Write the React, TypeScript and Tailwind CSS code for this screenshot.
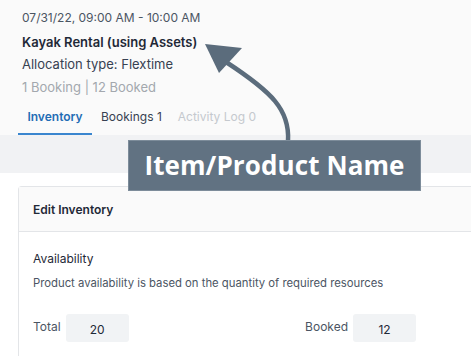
import React from "react";

const font = { fontFamily: "Inter, 'Noto Sans', sans-serif" };

function Header() {
  return (
    <div className="bg-[#fafafa] pl-[22px] pt-[10px]">
      <div className="text-[12px] leading-[16px] text-[#4b5563]">07/31/22, 09:00 AM - 10:00 AM</div>
      <div className="mt-[7px] text-[13px] font-semibold leading-[18px] text-[#1f2937]">
        Kayak Rental (using Assets)
      </div>
      <div className="mt-[4px] text-[13px] leading-[18px] text-[#374151]">Allocation type: Flextime</div>
      <div className="mt-[5px] text-[13px] leading-[18px] text-[#a3a8ae]">1 Booking | 12 Booked</div>
      <div className="mt-[13px] -ml-[4px] flex items-end text-[12px]">
        <div className="flex w-[74px] flex-col items-center">
          <span className="pb-[8px] font-semibold leading-[16px] text-[#1f6db5]">Inventory</span>
          <span className="h-[2px] w-full bg-[#3a86cf]" />
        </div>
        <span className="ml-[9px] pb-[10px] leading-[16px] text-[#374151]">Bookings 1</span>
        <span className="ml-[16px] pb-[10px] leading-[16px] text-[#c5c9ce]">Activity Log 0</span>
      </div>
    </div>
  );
}

function Field({ label, value }: { label: string; value: string }) {
  return (
    <div className="flex items-center gap-[5px]">
      <span className="-mt-[2px] text-[12px] text-[#4b5563]">{label}</span>
      <span className="flex h-[28px] w-[63px] items-center justify-center rounded-[3px] bg-[#f1f3f5] pt-[3px] text-[12px] text-[#1f2937]">
        {value}
      </span>
    </div>
  );
}

function EditCard() {
  return (
    <div className="ml-[18px] mt-[13px] rounded-tl-[4px] border-l border-t border-[#e3e5e8]">
      <div className="flex h-[45px] items-center border-b border-[#e3e5e8] bg-[#fafafa] pl-[14px]">
        <span className="pt-[1px] text-[12px] font-semibold text-[#1f2937]">Edit Inventory</span>
      </div>
      <div className="bg-white pl-[14px] pt-[19px] pb-[20px]">
        <div className="text-[12px] leading-[16px] text-[#1f2937]">Availability</div>
        <div className="mt-[8px] text-[11.3px] leading-[16px] text-[#4b5563]">
          Product availability is based on the quantity of required resources
        </div>
        <div className="mt-[23px] flex w-[383px] justify-between">
          <Field label="Total" value="20" />
          <Field label="Booked" value="12" />
        </div>
      </div>
    </div>
  );
}

function Callout() {
  return (
    <>
      <svg className="absolute left-0 top-0" width="471" height="356" viewBox="0 0 471 356">
        <path
          d="M288 141 C290 110 272 92 226 62"
          fill="none"
          stroke="#5b6c7c"
          strokeWidth="4.5"
        />
        <polygon points="205,44 242,48 219,73" fill="#5b6c7c" />
      </svg>
      <div className="absolute left-[128px] top-[140px] flex h-[51px] w-[293px] items-center justify-center border border-[#7d8c9a] bg-[#617282]">
        <span
          className="text-[26px] font-bold tracking-[0.1px] text-white"
          style={{ fontFamily: "'Open Sans', sans-serif" }}
        >
          Item/Product Name
        </span>
      </div>
    </>
  );
}

export default function App() {
  return (
    <div className="relative h-[356px] w-[471px] overflow-hidden bg-white" style={font}>
      <Header />
      <div className="h-[38px] bg-[#f1f2f4]" />
      <EditCard />
      <Callout />
    </div>
  );
}
